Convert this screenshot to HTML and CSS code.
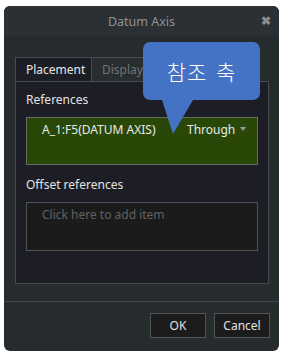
FILE: index.html
```html
<!DOCTYPE html>
<html lang="en">
  <head>
    <meta charset="UTF-8" />
    <title>Datum Axis</title>
    <link rel="stylesheet" href="styles.css">
  </head>
  <body>
    <div class="dialog">
      <div class="titlebar">
        <span class="title">Datum Axis</span>
        <span class="close">&#x2716;</span>
      </div>

      <div class="content">
        <div class="tabs">
          <div class="tab active">Placement</div>
          <div class="tab">Display</div>
        </div>
        <div class="panel">
          <div class="label">References</div>
          <div class="collector selected">
            <span class="ref">A_1:F5(DATUM AXIS)</span>
            <span class="constraint">Through <span class="caret"></span></span>
          </div>
          <div class="label">Offset references</div>
          <div class="collector empty">
            <span class="hint">Click here to add item</span>
          </div>
        </div>
      </div>

      <div class="footer">
        <button class="btn">OK</button>
        <button class="btn">Cancel</button>
      </div>

      <div class="callout">
        <span>참조 축</span>
        <svg class="pointer" width="32" height="34" viewBox="0 0 32 34">
          <polygon points="0,0 31,0 11,34" fill="#4472c4" />
        </svg>
      </div>
    </div>
  </body>
</html>
```

FILE: styles.css
```css
html,
body {
  margin: 0;
  background: #ffffff;
}
body {
  padding: 6px 0 0 4px;
  font-family: "Noto Sans", "Open Sans", sans-serif;
  font-size: 12px;
}
.dialog {
  position: relative;
  width: 275px;
  height: 345px;
  border-radius: 6px;
  background: #262b2e;
  display: flex;
  flex-direction: column;
  overflow: hidden;
}
.titlebar {
  height: 30px;
  background: #2b3034;
  display: flex;
  align-items: center;
  justify-content: center;
  position: relative;
}
.title {
  color: #8c9094;
  font-size: 12.5px;
}
.close {
  position: absolute;
  right: 8px;
  top: 6px;
  color: #8a8d90;
  font-size: 12px;
  font-weight: bold;
}
.content {
  padding: 21px 10px 0 11px;
}
.tabs {
  display: flex;
  height: 24px;
}
.tab {
  width: 60px;
  display: flex;
  align-items: center;
  padding-left: 10px;
  color: #6f7478;
  border: 1px solid #464b4f;
  border-bottom: none;
  border-left: none;
  background: #282d30;
}
.tab.active {
  width: 65px;
  color: #e6e6e6;
  background: #1d1e25;
  border-left: 1px solid #464b4f;
}
.panel {
  height: 203px;
  box-sizing: border-box;
  border: 1px solid #464b4f;
  background: #1d1e25;
  padding: 10px 10px 0 10px;
}
.label {
  color: #e3e3e3;
  height: 16px;
  line-height: 16px;
}
.collector {
  box-sizing: border-box;
  height: 49px;
  margin: 9px 0 11px;
  border: 1px solid #4e5356;
  display: flex;
  padding: 3px 0 0 15px;
}
.selected {
  background: #294807;
  border-color: #646a60;
  color: #e8e8e8;
  height: 48px;
  margin-bottom: 12px;
}
.ref {
  flex: 1;
}
.constraint {
  width: 70px;
}
.caret {
  display: inline-block;
  width: 0;
  height: 0;
  border-left: 3px solid transparent;
  border-right: 3px solid transparent;
  border-top: 4px solid #9a9a9a;
  vertical-align: 3px;
  margin-left: 2px;
}
.empty {
  background: #1b1b1c;
  margin-top: 9px;
}
.hint {
  color: #5f6264;
}
.footer {
  margin-top: 17px;
  border-top: 1px solid #40464a;
  display: flex;
  justify-content: flex-end;
  gap: 8px;
  padding: 11px 9px 0 0;
}
.btn {
  height: 25px;
  width: 56px;
  background: #1c1c1d;
  border: 1px solid #505558;
  color: #e0e0e0;
  font-family: "Noto Sans", "Open Sans", sans-serif;
  font-size: 12px;
  padding: 0;
}
.callout {
  position: absolute;
  left: 139px;
  top: 36px;
  width: 117px;
  height: 58px;
  border-radius: 7px;
  background: #4472c4;
  color: #ffffff;
  font-family: "Noto Sans CJK KR", sans-serif;
  font-size: 21px;
  font-weight: 300;
  letter-spacing: 1px;
  word-spacing: 3px;
  display: flex;
  align-items: center;
  justify-content: center;
}
.pointer {
  position: absolute;
  left: 19px;
  top: 58px;
}
```
